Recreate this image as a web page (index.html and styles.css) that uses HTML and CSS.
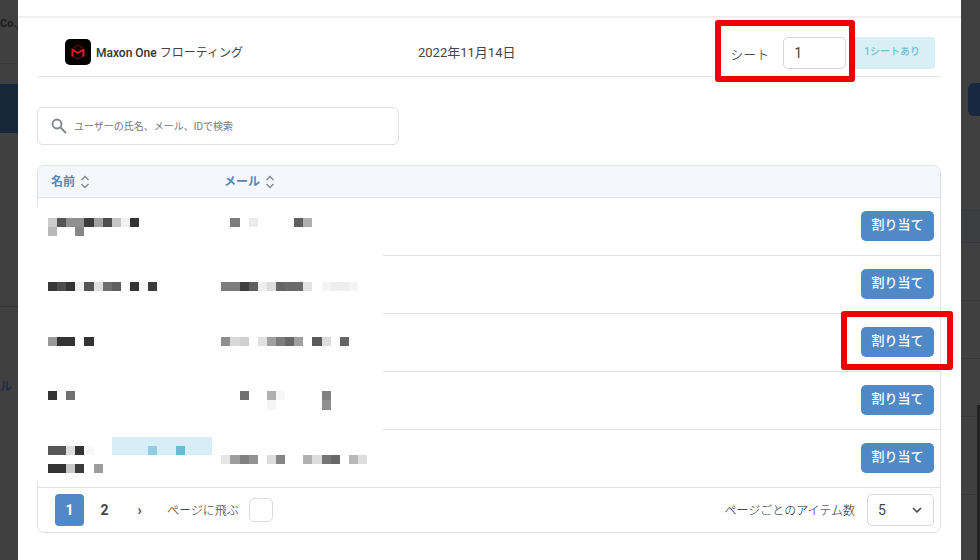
FILE: index.html
```
<!DOCTYPE html>
<html lang="ja">
  <head>
    <meta charset="UTF-8" />
    <title>Maxon One フローティング</title>
    <link rel="stylesheet" href="styles.css">
  </head>
  <body>
    <aside class="behind behind-left">
      <div class="org">Co.,</div>
      <div class="nav-active"></div>
      <div class="nav-section"></div>
      <div class="nav-link">ル</div>
    </aside>

    <main class="dialog">
      <header class="dialog-head"></header>

      <section class="product">
        <div class="product-name">
          <svg class="logo" viewBox="0 0 26 26" aria-hidden="true">
            <rect width="26" height="26" rx="5" fill="#000" />
            <path d="M8 9l5-3 5 3M8 17l5 3 5-3" fill="none" stroke="#7c1114" stroke-width="1" />
            <path d="M7.500 17.500V10.500L13 14l5.500-3.500v7" fill="none" stroke="#e3191d" stroke-width="2" stroke-linejoin="round" />
          </svg>
          <span><strong>Maxon One</strong> フローティング</span>
        </div>
        <div class="product-date">2022年11月14日</div>
        <div class="product-seats">
          <div class="seats-field marked">
            <label for="seats">シート</label>
            <input id="seats" type="text" value="1">
          </div>
          <span class="badge">1シートあり</span>
        </div>
      </section>

      <div class="search">
        <svg class="search-icon" viewBox="0 0 16 16" aria-hidden="true">
          <circle cx="6" cy="6" r="4.500" />
          <path d="M9.500 9.500L15 15" />
        </svg>
        <input type="search" aria-label="検索" placeholder="ユーザーの氏名、メール、IDで検索">
      </div>

      <div class="panel">
        <table class="users">
          <thead>
            <tr>
              <th class="col-name">名前 <svg class="sort" viewBox="0 0 10 14"><path d="M1.500 5L5 1.500 8.500 5M1.500 9L5 12.500 8.500 9" /></svg></th>
              <th class="col-mail">メール <svg class="sort" viewBox="0 0 10 14"><path d="M1.500 5L5 1.500 8.500 5M1.500 9L5 12.500 8.500 9" /></svg></th>
              <th></th>
            </tr>
          </thead>
          <tbody>
            <tr><td></td><td></td><td class="action"><button class="assign">割り当て</button></td></tr>
            <tr><td></td><td></td><td class="action"><button class="assign">割り当て</button></td></tr>
            <tr><td></td><td></td><td class="action"><button class="assign marked">割り当て</button></td></tr>
            <tr><td></td><td></td><td class="action"><button class="assign">割り当て</button></td></tr>
            <tr><td></td><td></td><td class="action"><button class="assign">割り当て</button></td></tr>
          </tbody>
        </table>

        <!-- pixelated names and mails -->
        <svg class="mosaic" viewBox="0 0 346 275" aria-hidden="true">
          <rect width="346" height="275" fill="#fff" />
          <g id="cells" transform="translate(11 11) scale(9.12)" shape-rendering="crispEdges">
            <rect x="7" y="24" width="11" height="2" fill="#d8edf5" />
          </g>
        </svg>

        <footer class="pager">
          <div class="pages">
            <button class="page current">1</button>
            <button class="page">2</button>
            <button class="page next">›</button>
            <label for="jump">ページに飛ぶ</label>
            <input id="jump" class="jump" type="text">
          </div>
          <div class="per-page">
            <label for="size">ページごとのアイテム数</label>
            <div class="select">
              <select id="size">
                <option>5</option>
              </select>
              <svg class="chevron" viewBox="0 0 10 6" aria-hidden="true"><path d="M1 1l4 4 4-4" /></svg>
            </div>
          </div>
        </footer>
      </div>
    </main>

    <aside class="behind behind-right">
      <div class="side-button"></div>
      <div class="side-rows">
        <div class="side-head"></div>
        <div class="side-row"></div>
        <div class="side-row"></div>
        <div class="side-row"></div>
        <div class="side-row last"></div>
      </div>
      <div class="scrollbar"></div>
    </aside>

    <script>
      // [row, first column, shades]
      const runs = [
        [0, 0, "cc 55 90 90 3c a0 4d c6 f1 33"],
        [0, 20, "7d -- eb -- -- -- -- 5f b0"],
        [1, 0, "b8 -- -- 88"],
        [7, 0, "38 4d 33 f0 55 e0 6e 5f -- 33 f6 3b"],
        [7, 19, "7d 7d 3d 5f ee dd 65 6b 6b e3 -- f4 ee ee f4"],
        [13, 0, "99 33 33 -- 33"],
        [13, 19, "8d d8 d0 -- e0 a0 7d 68 a0 -- 5a dd -- 66"],
        [19, 0, "33 -- 70"],
        [19, 21, "70 -- -- b0 f7 -- -- -- -- 80"],
        [20, 24, "f5 -- -- -- -- -- 90"],
        [25, 0, "58 58 dd 33 f8"],
        [25, 11, "8fcde2 -- -- 66bbd5"],
        [26, 19, "e6 9d 80 93 -- dd 85 -- -- b0 dd 75 68 -- b8 dd"],
        [27, 0, "33 33 c8 3b -- 9d"],
      ];

      const cells = document.getElementById("cells");

      runs.forEach(([row, start, shades]) => {
        shades.split(" ").forEach((shade, i) => {
          if (shade === "--") return;
          const rect = document.createElementNS("http://www.w3.org/2000/svg", "rect");
          rect.setAttribute("x", start + i);
          rect.setAttribute("y", row);
          rect.setAttribute("width", 1);
          rect.setAttribute("height", 1);
          rect.setAttribute("fill", "#" + (shade.length === 2 ? shade.repeat(3) : shade));
          cells.appendChild(rect);
        });
      });
    </script>
  </body>
</html>
```
FILE: styles.css
```
* {
  box-sizing: border-box;
}

body {
  margin: 0;
  min-height: 100vh;
  display: grid;
  grid-template-columns: 18px 1fr 19px;
  font-family: Roboto, "Noto Sans CJK JP", sans-serif;
  font-size: 12px;
  color: #444;
  background-color: #404040;
}

button,
input,
select {
  font-family: inherit;
  color: inherit;
  margin: 0;
}

label {
  font-weight: 300;
  color: #222;
}

/* page behind the dialog */
.behind {
  overflow: hidden;
  display: flex;
  flex-direction: column;
}

.org {
  height: 64px;
  padding-top: 16px;
  border-bottom: 1px solid #383838;
  font-size: 11px;
  line-height: 16px;
  font-weight: bold;
  color: #1c1c1c;
}

.nav-active {
  height: 49px;
  margin-top: 20px;
  background-color: #18263a;
}

.nav-section {
  height: 174px;
  border-bottom: 1px solid #353535;
}

.nav-link {
  padding-top: 72px;
  line-height: 16px;
  font-weight: bold;
  color: #20294a;
}

.behind-right {
  position: relative;
}

.side-button {
  height: 33px;
  margin: 83px 0 0 7px;
  border-radius: 6px 0 0 6px;
  background-color: #17283f;
}

.side-rows {
  margin-top: 94px;
  border-top: 1px solid #383838;
}

.side-head {
  height: 32px;
  background-color: #3c3e41;
  border-bottom: 1px solid #363636;
}

.side-row {
  height: 58px;
  border-bottom: 1px solid #373737;
}

.side-row.last {
  height: 78px;
}

.scrollbar {
  position: absolute;
  right: 0;
  bottom: 0;
  width: 3px;
  height: 155px;
  background-color: #222;
}

/* dialog */
.dialog {
  padding: 0 20px 0 19px;
  background-color: #fff;
}

.dialog-head {
  height: 18px;
  margin: 0 -20px 0 -19px;
  border-bottom: 2px solid #f0f0f0;
}

.product {
  display: grid;
  grid-template-columns: 381px 1fr auto;
  align-items: start;
  height: 59px;
  padding: 19px 6px 0 0;
  border-bottom: 1px solid #e4e4e4;
}

.product-name,
.product-date,
.product-seats {
  display: flex;
  align-items: center;
}

.product-name,
.product-date {
  height: 30px;
}

.product-name {
  gap: 5px;
  padding-left: 28px;
}

.product-name span,
.product-date {
  padding-bottom: 2px;
}

.product-name strong {
  font-weight: 500;
  color: #333;
}

.logo {
  width: 26px;
  height: 26px;
}

.product-date {
  font-size: 13px;
}

.product-seats {
  gap: 5px;
}

.seats-field {
  display: flex;
  align-items: center;
  gap: 14px;
  font-size: 13px;
}

.seats-field input {
  width: 63px;
  height: 32px;
  padding: 0 10px;
  border: 1px solid #d5d5d9;
  border-radius: 5px;
  font-size: 14px;
}

.badge {
  display: flex;
  align-items: center;
  height: 32px;
  padding: 0 15px 5px 13px;
  border-radius: 3px;
  background-color: #d8eff5;
  color: #6dbdd3;
  font-size: 10px;
  font-weight: 500;
}

/* red frame drawn round a control */
.marked {
  position: relative;
}

.marked::after {
  content: "";
  position: absolute;
  border: 6px solid #ee0000;
  border-radius: 3px;
}

.seats-field.marked::after {
  inset: -17px -9px -13px -15px;
}

.assign.marked::after {
  inset: -16px -19px -13px -20px;
}

.search {
  display: flex;
  align-items: center;
  gap: 7px;
  width: 40%;
  height: 38px;
  margin: 30px 0 20px;
  padding: 0 13px;
  border: 1px solid #e0e0e3;
  border-radius: 6px;
}

.search-icon {
  width: 16px;
  height: 16px;
  fill: none;
  stroke: #7d8489;
  stroke-width: 1.8;
}

.search input {
  flex: 1;
  min-width: 0;
  padding: 0;
  border: 0;
  outline: 0;
  background: none;
  font-size: 10px;
}

.search input::placeholder {
  color: #777;
}

.panel {
  position: relative;
  border: 1px solid #dfe1e5;
  border-radius: 7px;
}

.users {
  width: 100%;
  table-layout: fixed;
  border-collapse: separate;
  border-spacing: 0;
}

.users th {
  height: 32px;
  padding: 0 0 0 13px;
  border-bottom: 1px solid #dfe2e8;
  background-color: #f4f8fe;
  text-align: left;
  font-weight: bold;
  line-height: 16px;
  color: #5588ba;
}

.users th:first-child {
  border-top-left-radius: 6px;
}

.users th:last-child {
  border-top-right-radius: 6px;
}

.col-name,
.col-mail {
  width: 173px;
}

.sort {
  width: 10px;
  height: 14px;
  margin-left: 2px;
  vertical-align: middle;
  fill: none;
  stroke: #858b91;
  stroke-width: 1.5;
}

.users td {
  height: 58px;
  padding: 0;
  border-bottom: 1px solid #e0e0e2;
}

.users .action {
  padding: 0 6px 2px 0;
  text-align: right;
}

.assign {
  width: 73px;
  height: 30px;
  padding: 0 0 2px;
  border: 0;
  border-radius: 5px;
  background-color: #5089c6;
  color: #fff;
  font-size: 13px;
  font-weight: 500;
  line-height: 20px;
}

.mosaic {
  position: absolute;
  left: -1px;
  top: 41px;
  width: 346px;
  height: 275px;
}

.pager {
  display: flex;
  justify-content: space-between;
  align-items: center;
  height: 44px;
  padding: 0 6px 0 17px;
}

.pages,
.per-page {
  display: flex;
  align-items: center;
}

.pager label {
  padding-bottom: 2px;
}

.page {
  width: 29px;
  height: 32px;
  margin-right: 6px;
  padding: 0;
  border: 0;
  border-radius: 4px;
  background: none;
  font-size: 14px;
  font-weight: bold;
}

.page.current {
  background-color: #5089c6;
  color: #fff;
}

.page.next {
  margin-right: 13px;
}

.jump {
  width: 24px;
  height: 24px;
  margin-left: 10px;
  padding: 0 4px;
  border: 1px solid #dcdce0;
  border-radius: 5px;
}

.per-page {
  gap: 12px;
}

.select {
  display: grid;
  align-items: center;
}

.select select,
.chevron {
  grid-area: 1 / 1;
}

.select select {
  appearance: none;
  width: 67px;
  height: 32px;
  padding: 0 10px;
  border: 1px solid #d8d8dc;
  border-radius: 5px;
  background-color: #fff;
  font-size: 14px;
}

.chevron {
  justify-self: end;
  width: 10px;
  height: 6px;
  margin-right: 12px;
  pointer-events: none;
  fill: none;
  stroke: #444;
  stroke-width: 1.5;
}
```
